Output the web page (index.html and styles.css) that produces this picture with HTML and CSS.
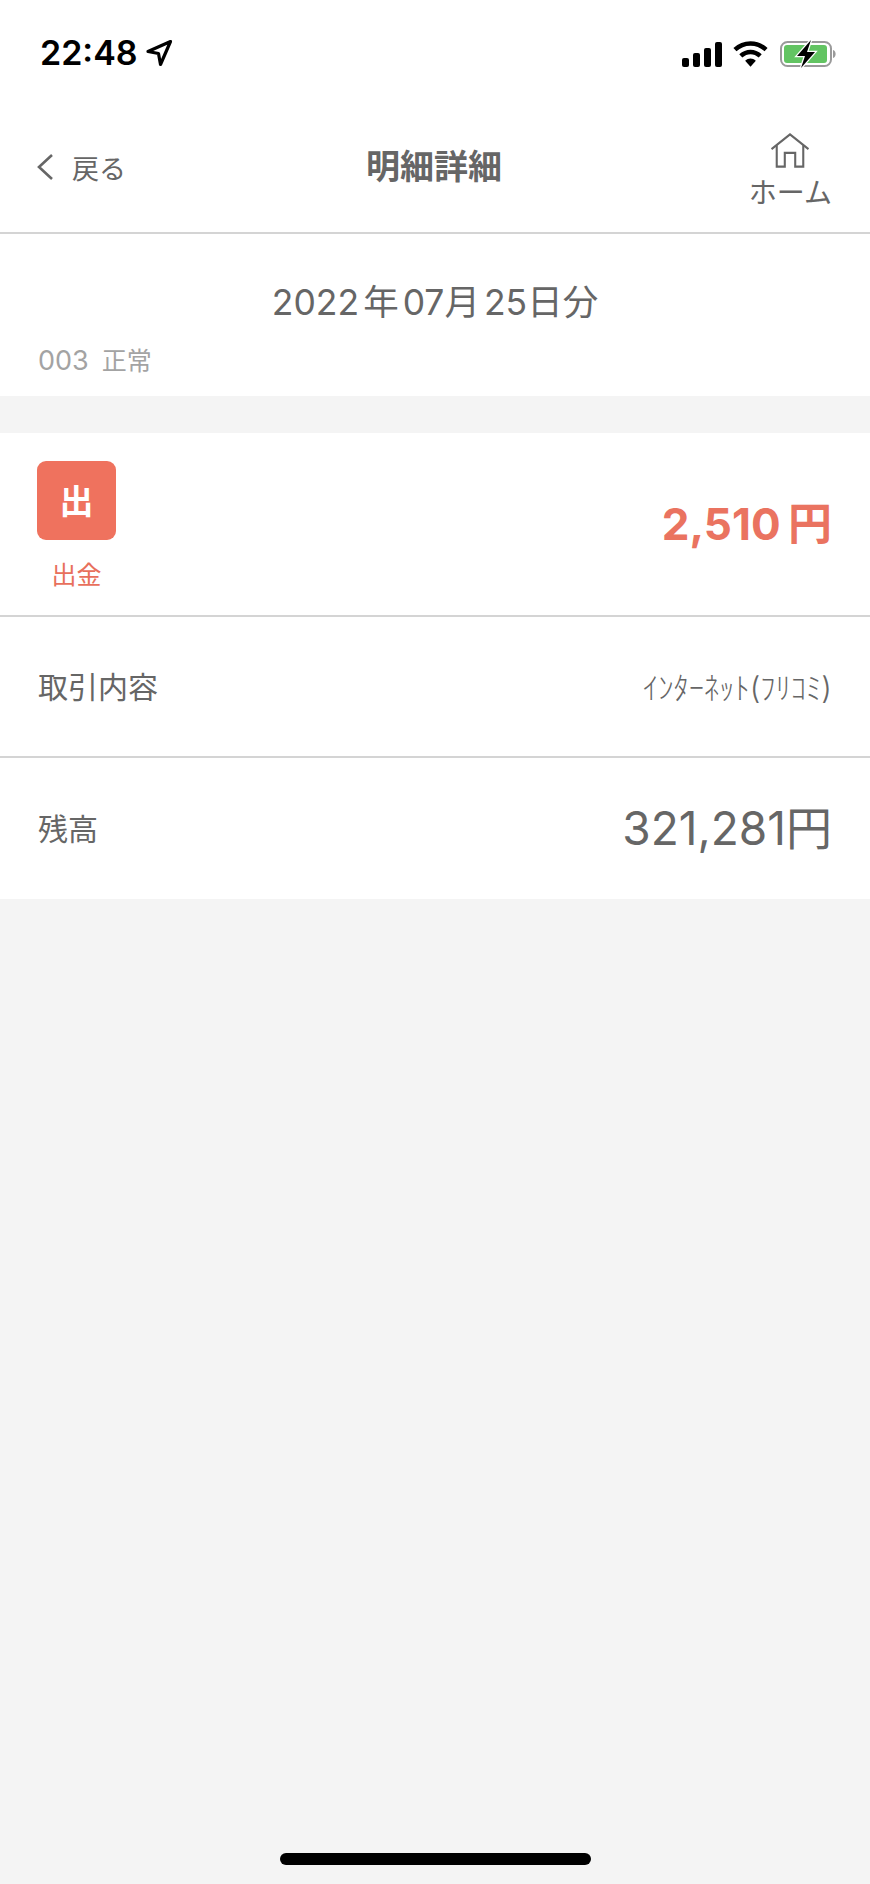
FILE: index.html
```html
<!DOCTYPE html>
<html lang="ja">
<head>
    <meta charset="UTF-8">
    <meta name="viewport" content="width=device-width, initial-scale=1.0">
    <title>明細詳細</title>
    <link rel="stylesheet" href="styles.css">
</head>
<body>
    <div class="status-bar">
        <div class="status-time">
            <span>22:48</span>
            <svg width="28" height="28" viewBox="0 0 28 28"><path d="M25.5 2.5 L3 12.5 L13.5 14.5 L15.5 25.5 Z" fill="none" stroke="#000" stroke-width="3.2" stroke-linejoin="round"/></svg>
        </div>
        <div class="status-icons">
            <svg width="40" height="25" viewBox="0 0 40 25"><rect x="0" y="16" width="7" height="9" rx="2"/><rect x="11" y="11" width="7" height="14" rx="2"/><rect x="22" y="6" width="7" height="19" rx="2"/><rect x="33" y="0" width="7" height="25" rx="2"/></svg>
            <svg width="35" height="26" viewBox="0 0 36 26"><path d="M2 8.5 C11 0 25 0 34 8.5" fill="none" stroke="#000" stroke-width="4.6"/><path d="M8 15 C14 9.5 22 9.5 28 15" fill="none" stroke="#000" stroke-width="4.6"/><path d="M12.5 20 C16 17 20 17 23.5 20 L18 26 Z"/></svg>
            <svg class="battery" width="57" height="28" viewBox="0 0 57 28"><rect x="1" y="2" width="50" height="24" rx="6.5" fill="none" stroke="#9a9a9a" stroke-width="2"/><rect x="4" y="5" width="43" height="18" rx="3" fill="#62c462"/><path d="M53 10 C56.5 11 56.5 17 53 18 Z" fill="#9a9a9a"/><path d="M31 0 L17 16 H25 L21 28 L35 12 H27 Z" stroke="#fff" stroke-width="2.5" paint-order="stroke"/></svg>
        </div>
    </div>

    <header class="nav-bar">
        <div class="nav-back">
            <svg width="18" height="28" viewBox="0 0 18 28"><path d="M16 2 L3 14 L16 26" fill="none" stroke="#666" stroke-width="2.6"/></svg>
            <span>戻る</span>
        </div>
        <h1 class="nav-title">明細詳細</h1>
        <div class="nav-home">
            <svg class="home-icon" width="40" height="36" viewBox="0 0 42 38"><path d="M1.5 17 L21 1.5 L40.5 17" fill="none" stroke="#666" stroke-width="2.2"/><path d="M7 13 V35.5 H15.5 V21 H26.5 V35.5 H35 V13" fill="none" stroke="#666" stroke-width="2.2"/></svg>
            <span>ホーム</span>
        </div>
    </header>

    <section class="date-box">
        <div class="date-text">2022 年 07月 25日分</div>
        <div class="date-sub"><span class="date-code">003</span><span>正常</span></div>
    </section>

    <section class="detail-list">
        <div class="detail-row amount-row">
            <div class="type-col">
                <div class="type-badge">出</div>
                <div class="type-label">出金</div>
            </div>
            <div class="amount">2,510 円</div>
        </div>
        <div class="detail-row text-row">
            <span class="row-label">取引内容</span>
            <span class="row-value">ｲﾝﾀｰﾈｯﾄ(ﾌﾘｺﾐ)</span>
        </div>
        <div class="detail-row text-row last-row">
            <span class="row-label">残高</span>
            <span class="balance">321,281円</span>
        </div>
    </section>

    <div class="home-indicator"></div>
</body>
</html>
```

FILE: styles.css
```css
/* Reset and Base Styles */
* {
  margin: 0;
  padding: 0;
  box-sizing: border-box;
  font-family: Inter, "Noto Sans CJK JP", sans-serif;
}

body {
  width: 870px;
  height: 1884px;
  background-color: #f4f4f4;
  color: #666;
  display: flex;
  flex-direction: column;
  overflow: hidden;
}

.status-bar {
  height: 88px;
  background: white;
  padding: 33px 33px 0 40px;
  display: flex;
  justify-content: space-between;
  align-items: flex-start;
}

.status-time {
  display: flex;
  align-items: center;
  gap: 7px;
  color: #000;
  font-size: 34px;
  font-weight: 600;
  line-height: 40px;
}

.status-icons {
  display: flex;
  align-items: center;
  gap: 11px;
  margin-top: 7px;
}

.battery {
  margin-left: 1px;
}

.nav-bar {
  height: 146px;
  background: white;
  border-bottom: 2px solid #d4d4d4;
  padding: 14px 38px 0 36px;
  display: grid;
  grid-template-columns: 1fr auto 1fr;
  align-items: center;
}

.nav-back {
  display: flex;
  align-items: center;
  gap: 18px;
  font-size: 27px;
}

.nav-title {
  font-size: 34px;
  font-weight: 700;
  line-height: 48px;
}

.nav-home {
  justify-self: end;
  display: flex;
  flex-direction: column;
  align-items: center;
  margin-top: 10px;
  font-size: 28px;
  line-height: 36px;
}

.home-icon {
  margin-bottom: 6px;
}

.date-box {
  height: 162px;
  background: white;
  padding: 0 38px;
  margin-bottom: 37px;
}

.date-text {
  padding-top: 47px;
  text-align: center;
  font-size: 35.5px;
  line-height: 44px;
  word-spacing: -6px;
}

.date-sub {
  margin-top: 20px;
  display: flex;
  gap: 13px;
  font-size: 25px;
  line-height: 32px;
  color: #a3a3a3;
}

.date-code {
  font-size: 27px;
}

.detail-list {
  background: white;
}

.detail-row {
  display: flex;
  justify-content: space-between;
  align-items: center;
  padding: 0 38px;
  border-bottom: 2px solid #d4d4d4;
}

.amount-row {
  height: 184px;
  padding-left: 37px;
}

.text-row {
  height: 141px;
}

.last-row {
  border-bottom: none;
}

.type-col {
  display: flex;
  flex-direction: column;
  align-items: center;
  padding-top: 4px;
}

.type-badge {
  width: 79px;
  height: 79px;
  border-radius: 9px;
  padding-bottom: 3px;
  background-color: #ef725e;
  color: white;
  font-size: 34px;
  font-weight: 700;
  display: flex;
  align-items: center;
  justify-content: center;
}

.type-label {
  margin-top: 19px;
  font-size: 25px;
  line-height: 32px;
  color: #e8705c;
}

.amount {
  font-size: 44px;
  font-weight: 700;
  color: #ea7360;
  word-spacing: -3px;
  padding-bottom: 6px;
}

.row-label {
  font-size: 30px;
  padding-bottom: 3px;
}

.row-value {
  font-size: 30.5px;
  font-weight: 300;
  padding-bottom: 2px;
}

.balance {
  font-size: 46px;
  padding-bottom: 8px;
}

.home-indicator {
  flex-shrink: 0;
  align-self: center;
  margin: auto 0 19px;
  width: 311px;
  height: 12px;
  border-radius: 6px;
  background-color: #000;
}
```
